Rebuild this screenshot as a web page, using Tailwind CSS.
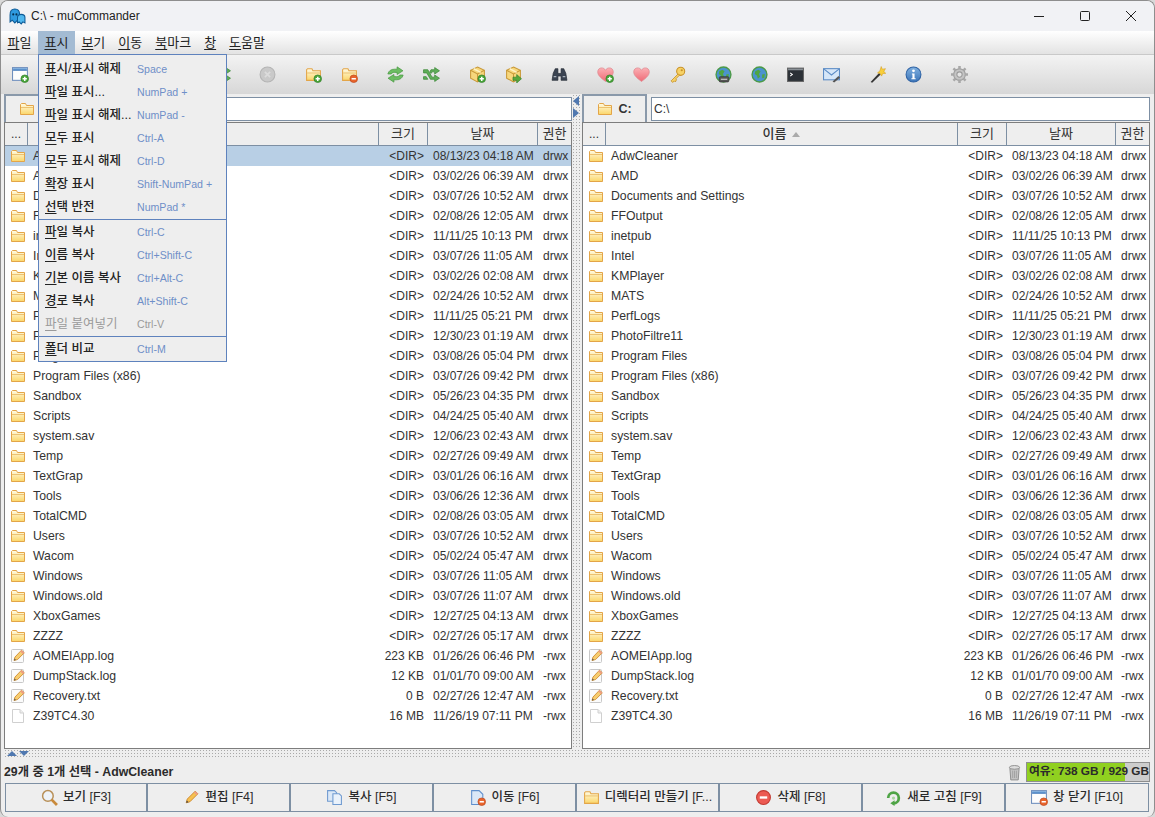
<!DOCTYPE html>
<html lang="ko">
<head>
    <meta charset="UTF-8">
    <title>C:\ - muCommander</title>
    <script src="https://cdn.jsdelivr.net/npm/@tailwindcss/browser@4"></script>
</head>
<body class="bg-[#d9d9d9] overflow-hidden font-['Liberation_Sans','Noto_Sans_CJK_KR',sans-serif] text-[12px] text-[#333]">
    <!-- icons -->
    <svg class="absolute w-0 h-0">
        <defs>
            <linearGradient id="fg" x1="0" y1="0" x2="0" y2="1"><stop offset="0" stop-color="#fffbe4"/><stop offset="1" stop-color="#fbd668"/></linearGradient>
            <linearGradient id="hg" x1="0" y1="0" x2="0" y2="1"><stop offset="0" stop-color="#fbb0b4"/><stop offset="1" stop-color="#ef6a76"/></linearGradient>
            <linearGradient id="bg" x1="0" y1="0" x2="0" y2="1"><stop offset="0" stop-color="#7fb0e0"/><stop offset="1" stop-color="#3b74b8"/></linearGradient>
            <symbol id="folder" viewBox="0 0 16 16"><path d="M1.500 3.500V13.500H14.500V4.500H7.500L6.500 2.500H2.500Z" fill="url(#fg)" stroke="#e3a548"/><path d="M2 6.500H14" stroke="#ecc272"/></symbol>
            <symbol id="plus" viewBox="0 0 16 16"><circle cx="12" cy="12" r="3.600" fill="#4aa53a" stroke="#2f7d28" stroke-width=".6"/><path d="M10 12H14M12 10V14" stroke="#fff" stroke-width="1.400"/></symbol>
            <symbol id="minus" viewBox="0 0 16 16"><circle cx="12" cy="12" r="3.600" fill="#e8642c" stroke="#b8431a" stroke-width=".6"/><path d="M10 12H14" stroke="#fff" stroke-width="1.500"/></symbol>
            <symbol id="window" viewBox="0 0 16 16"><rect x=".5" y="1.500" width="14" height="12" fill="#fdfdfd" stroke="#6f8fbd"/><rect x="1" y="2" width="13" height="2.500" fill="url(#bg)"/></symbol>
            <symbol id="file" viewBox="0 0 16 16"><path d="M2.500 1.500H10L13.500 5V14.500H2.500Z" fill="#fff" stroke="#d0d0d0"/><path d="M10 1.500V5H13.500" fill="#eee" stroke="#d0d0d0"/></symbol>
            <symbol id="pencil" viewBox="0 0 16 16"><path d="M3 13L4 9.500L11.500 2L14 4.500L6.500 12Z" fill="#f6c050" stroke="#c97f22" stroke-width=".8"/><path d="M11.500 2L14 4.500L12.800 5.700L10.300 3.200Z" fill="#ee9a86"/><path d="M3 13L3.600 10.800L5.200 12.400Z" fill="#444"/></symbol>
            <symbol id="textfile" viewBox="0 0 16 16"><rect x="1.500" y="1.500" width="12" height="13" rx="1" fill="#fbfbfb" stroke="#c8c8c8"/><path d="M4 12.500L5 9L11.500 2.200L14.300 4.800L7.600 11.500Z" fill="#f7cd70" stroke="#cf8d30" stroke-width=".9"/><path d="M11.500 2.200L14.300 4.800L13 6.100L10.200 3.500Z" fill="#ee9a86"/><path d="M4 12.500L4.500 10.500L6 12Z" fill="#555"/></symbol>
            <symbol id="box" viewBox="0 0 16 16"><path d="M8 1L14.500 4V11.500L8 15L1.500 11.500V4Z" fill="#f7d77c" stroke="#c99a3a"/><path d="M1.500 4L8 7.500L14.500 4M8 7.500V15" fill="none" stroke="#c99a3a"/><path d="M4.500 2.600L11 6" stroke="#fff3c4" stroke-width="1.400"/></symbol>
            <symbol id="heart" viewBox="0 0 16 16"><path d="M8 14.500C3 11 .7 8.500 .7 5.500C.7 3.200 2.400 1.800 4.300 1.800C5.900 1.800 7.200 2.600 8 4C8.800 2.600 10.100 1.800 11.700 1.800C13.600 1.800 15.300 3.200 15.300 5.500C15.300 8.500 13 11 8 14.500Z" fill="url(#hg)" stroke="#e08a90" stroke-width=".7"/></symbol>
            <symbol id="globe" viewBox="0 0 16 16"><circle cx="8" cy="8" r="7" fill="#4b93cf" stroke="#4c9a48" stroke-width="1.300"/><path d="M4 5L7 3.500L9 5L7.500 7.500L8.500 10L6.500 12L5.500 9L3.500 7.500ZM10.500 8L13 7.500L12.500 11L10.500 11.500Z" fill="#4fa544"/></symbol>
        </defs>
    </svg>

    <div class="relative flex flex-col w-[1155px] h-[817px] bg-[#eeeeee] rounded-lg border border-[#8e8e8e] border-b-0 overflow-hidden">
        <!-- title bar -->
        <div class="flex items-center h-[30px] bg-[#f1f2f5] shrink-0 text-[#222]">
            <svg viewBox="0 0 16 16" class="w-[17px] h-[17px] ml-[8px]">
                <path d="M1 13V6.500C1 3 3 1 5.500 1S10 3 10 6.500V13L8 11.500L5.500 14L3 11.500Z" fill="#2f9be0" stroke="#0d5a96"/>
                <path d="M8 14V9C8 7 9.500 6 11.500 6S15 7 15 9V14L13 13L11.500 15L9.500 13Z" fill="#4fb7ee" stroke="#0d5a96"/>
                <circle cx="4" cy="6" r="1" fill="#06304f"/><circle cx="7" cy="6" r="1" fill="#06304f"/>
            </svg>
            <span class="ml-[5px] text-[12px]">C:\ - muCommander</span>
            <div class="ml-auto flex h-full">
                <div class="w-[46px] flex items-center justify-center"><svg class="w-[12px] h-[12px]" viewBox="0 0 12 12"><path d="M1 6.500H11" stroke="#222"/></svg></div>
                <div class="w-[46px] flex items-center justify-center"><svg class="w-[12px] h-[12px]" viewBox="0 0 12 12"><rect x="1.500" y="1.500" width="9" height="9" rx="1" fill="none" stroke="#222"/></svg></div>
                <div class="w-[46px] flex items-center justify-center"><svg class="w-[12px] h-[12px]" viewBox="0 0 12 12"><path d="M1 1L11 11M11 1L1 11" stroke="#222"/></svg></div>
            </div>
        </div>

        <!-- menu bar -->
        <div class="flex items-stretch h-[24px] shrink-0 bg-linear-to-b from-white to-[#e3e3e3] border-b border-[#c9c9c9] text-[13px] text-[#222]">
            <span class="px-[6.500px] flex items-center"><u class="underline-offset-2">파</u>일</span>
            <span class="px-[6.500px] flex items-center bg-[#a3bbd3]"><u class="underline-offset-2">표</u>시</span>
            <span class="px-[6.500px] flex items-center"><u class="underline-offset-2">보</u>기</span>
            <span class="px-[6.500px] flex items-center"><u class="underline-offset-2">이</u>동</span>
            <span class="px-[6.500px] flex items-center"><u class="underline-offset-2">북</u>마크</span>
            <span class="px-[6.500px] flex items-center"><u class="underline-offset-2">창</u></span>
            <span class="px-[6.500px] flex items-center"><u class="underline-offset-2">도</u>움말</span>
        </div>

        <!-- toolbar -->
        <div id="toolbar" class="flex items-center h-[39px] shrink-0 pl-[1px] bg-linear-to-b from-[#f3f3f3] to-[#d7d7d7]"></div>

        <!-- panels -->
        <div class="flex flex-1 min-h-0 pl-[3px] pr-[4px]">
            <div id="leftPanel" class="w-[568px] flex flex-col"></div>
            <div class="w-[10px] relative bg-[radial-gradient(#a9a9a9_0.7px,transparent_0.8px)] bg-[length:3px_3px]">
                <div class="absolute left-[1px] top-[2px] w-0 h-0 border-y-[5px] border-y-transparent border-r-[6px] border-r-[#4f78b0]"></div>
                <div class="absolute left-[1px] top-[14px] w-0 h-0 border-y-[5px] border-y-transparent border-l-[6px] border-l-[#4f78b0]"></div>
            </div>
            <div id="rightPanel" class="w-[568px] flex flex-col"></div>
        </div>

        <!-- bottom splitter -->
        <div class="relative h-[10px] shrink-0 ml-[3px] mr-[4px] bg-[radial-gradient(#a9a9a9_0.7px,transparent_0.8px)] bg-[length:3px_3px]">
            <div class="absolute left-[3px] top-[2px] w-0 h-0 border-x-[5px] border-x-transparent border-b-[5px] border-b-[#4f78b0]"></div>
            <div class="absolute left-[15px] top-[2px] w-0 h-0 border-x-[5px] border-x-transparent border-t-[5px] border-t-[#4f78b0]"></div>
        </div>

        <!-- status bar -->
        <div class="flex items-center h-[24px] shrink-0 pt-[2px] pl-[3px] pr-[4px] font-semibold text-[#2b2b2b]">
            <span class="text-[12.300px]">29개 중 1개 선택 - AdwCleaner</span>
            <svg viewBox="0 0 14 18" class="ml-auto w-[13px] h-[17px]">
                <path d="M2 4H12L11 17H3Z" fill="#c4c4c4" stroke="#8a8a8a"/><ellipse cx="7" cy="3.500" rx="5.500" ry="2" fill="#dedede" stroke="#8a8a8a"/><path d="M5 7V15M7 7V15M9 7V15" stroke="#a0a0a0"/>
            </svg>
            <div class="relative ml-[5px] w-[124px] h-[20px] bg-[#cdcdcd] border border-[#8e8e8e] flex items-center">
                <div class="absolute left-0 top-0 h-full w-[98px] bg-[#90d020]"></div>
                <span class="relative ml-[2px] whitespace-nowrap font-semibold text-[11.800px]">여유: 738 GB / 929 GB</span>
            </div>
        </div>

        <!-- function keys -->
        <div id="buttons" class="flex h-[29px] shrink-0 ml-[4px] mr-[5px] border border-[#7d8fa3]"></div>
        <div class="h-[5px] shrink-0"></div>

        <!-- open menu -->
        <div id="menu" class="absolute left-[37px] top-[53px] w-[189px] h-[308px] pt-[3px] bg-[#eeeeee] border border-[#5e82bd]"></div>
    </div>

    <script>
        const rows = [
            ["f", "AdwCleaner", "<DIR>", "08/13/23 04:18 AM", "drwx"],
            ["f", "AMD", "<DIR>", "03/02/26 06:39 AM", "drwx"],
            ["f", "Documents and Settings", "<DIR>", "03/07/26 10:52 AM", "drwx"],
            ["f", "FFOutput", "<DIR>", "02/08/26 12:05 AM", "drwx"],
            ["f", "inetpub", "<DIR>", "11/11/25 10:13 PM", "drwx"],
            ["f", "Intel", "<DIR>", "03/07/26 11:05 AM", "drwx"],
            ["f", "KMPlayer", "<DIR>", "03/02/26 02:08 AM", "drwx"],
            ["f", "MATS", "<DIR>", "02/24/26 10:52 AM", "drwx"],
            ["f", "PerfLogs", "<DIR>", "11/11/25 05:21 PM", "drwx"],
            ["f", "PhotoFiltre11", "<DIR>", "12/30/23 01:19 AM", "drwx"],
            ["f", "Program Files", "<DIR>", "03/08/26 05:04 PM", "drwx"],
            ["f", "Program Files (x86)", "<DIR>", "03/07/26 09:42 PM", "drwx"],
            ["f", "Sandbox", "<DIR>", "05/26/23 04:35 PM", "drwx"],
            ["f", "Scripts", "<DIR>", "04/24/25 05:40 AM", "drwx"],
            ["f", "system.sav", "<DIR>", "12/06/23 02:43 AM", "drwx"],
            ["f", "Temp", "<DIR>", "02/27/26 09:49 AM", "drwx"],
            ["f", "TextGrap", "<DIR>", "03/01/26 06:16 AM", "drwx"],
            ["f", "Tools", "<DIR>", "03/06/26 12:36 AM", "drwx"],
            ["f", "TotalCMD", "<DIR>", "02/08/26 03:05 AM", "drwx"],
            ["f", "Users", "<DIR>", "03/07/26 10:52 AM", "drwx"],
            ["f", "Wacom", "<DIR>", "05/02/24 05:47 AM", "drwx"],
            ["f", "Windows", "<DIR>", "03/07/26 11:05 AM", "drwx"],
            ["f", "Windows.old", "<DIR>", "03/07/26 11:07 AM", "drwx"],
            ["f", "XboxGames", "<DIR>", "12/27/25 04:13 AM", "drwx"],
            ["f", "ZZZZ", "<DIR>", "02/27/26 05:17 AM", "drwx"],
            ["t", "AOMEIApp.log", "223 KB", "01/26/26 06:46 PM", "-rwx"],
            ["t", "DumpStack.log", "12 KB", "01/01/70 09:00 AM", "-rwx"],
            ["t", "Recovery.txt", "0 B", "02/27/26 12:47 AM", "-rwx"],
            ["b", "Z39TC4.30", "16 MB", "11/26/19 07:11 PM", "-rwx"]
        ];
        const rowIcons = { f: "folder", t: "textfile", b: "file" };
        const esc = s => s.replace(/</g, "&lt;").replace(/>/g, "&gt;");

        function panel(selected) {
            const rowCols = selected ? "grid-cols-[374px_49px_110px_33px]" : "grid-cols-[375px_49px_109px_33px]";
            const headCols = selected ? "grid-cols-[23px_351px_49px_110px_33px]" : "grid-cols-[23px_352px_49px_109px_33px]";
            const body = rows.map((r, i) => `
                <div class="grid ${rowCols} h-[20px] items-center whitespace-nowrap ${selected && i === 0 ? "bg-[#b8cfe5]" : ""}">
                    <div class="flex items-center pl-[5px]"><svg class="w-[16px] h-[16px]"><use href="#${rowIcons[r[0]]}"/></svg><span class="ml-[7px] text-[12.250px]">${r[1]}</span></div>
                    <div class="text-right pr-[4px]">${esc(r[2])}</div>
                    <div class="pl-[5px]">${r[3]}</div>
                    <div class="pl-[5px]">${r[4]}</div>
                </div>`).join("");
            return `
                <div class="flex h-[28px] shrink-0">
                    <div class="flex items-center justify-center gap-[5px] w-[65px] border-2 border-[#8a99aa] border-b-0 font-semibold">
                        <svg class="w-[16px] h-[16px]"><use href="#folder"/></svg><span class="text-[12.500px]">C:</span>
                    </div>
                    <div class="flex items-center flex-1 h-[24px] mt-[3px] ml-[4px] pl-[2px] bg-white border border-[#7d8fa3]">C:\\</div>
                </div>
                <div class="flex-1 min-h-0 bg-white border border-[#7d7d7d]">
                    <div class="grid ${headCols} h-[23px] bg-[#eeeeee] border-b border-[#7d8fa3] text-[13px]">
                        <div class="flex items-center justify-center border-r border-[#7d8fa3] text-[12px]">...</div>
                        <div class="flex items-center justify-center gap-[6px] border-r border-[#7d8fa3] font-medium">이름 <span class="w-0 h-0 border-x-[4px] border-x-transparent border-b-[5px] border-b-[#aaaaaa]"></span></div>
                        <div class="flex items-center justify-center border-r border-[#7d8fa3]">크기</div>
                        <div class="flex items-center justify-center border-r border-[#7d8fa3]">날짜</div>
                        <div class="flex items-center justify-center">권한</div>
                    </div>
                    ${body}
                </div>`;
        }
        document.getElementById("leftPanel").innerHTML = panel(true);
        document.getElementById("rightPanel").innerHTML = panel(false);

        // toolbar: 36px buttons, 10px separators
        const ic = (inner, vb) => `<svg viewBox="0 0 ${vb || 16} ${vb || 16}" class="w-[17px] h-[17px]">${inner}</svg>`;
        const swap = '<path d="M.5 3.500H4.500L8.500 10.500H11V8.500L15.500 11.500L11 14.500V12.500H7L3.500 6.500H.5Z" fill="#5fae58" stroke="#3d8a38" stroke-width=".7"/><path d="M.5 10H3L4.500 12.500H.5ZM6.500 5.500L7.500 3.500H11V1.500L15.500 4.500L11 7.500V5.500H8.500L7.500 7Z" fill="#5fae58" stroke="#3d8a38" stroke-width=".7"/>';
        const tool = [
            ic('<use href="#window" width="16" height="16"/><use href="#plus" width="16" height="16"/>'),
            "gapA",
            ic(swap),
            "gapB",
            ic('<circle cx="8" cy="8" r="7" fill="#c9c9c9" stroke="#b4b4b4"/><path d="M5.500 5.500L10.500 10.500M10.500 5.500L5.500 10.500" stroke="#dcdcdc" stroke-width="1.600"/>'),
            "sep",
            ic('<use href="#folder" width="16" height="16"/><use href="#plus" width="16" height="16"/>'),
            ic('<use href="#folder" width="16" height="16"/><use href="#minus" width="16" height="16"/>'),
            "sep",
            // flat loop of two chunky arrows
            ic('<path d="M.8 7.500C1.500 4.500 4 3 7 3H9.500V.8L15 4.500L9.500 8V6H7C5.500 6 4.500 6.500 4 7.500Z" fill="#6cbd62" stroke="#4a9a44" stroke-width=".7"/><path d="M15.200 8.500C14.500 11.500 12 13 9 13H6.500V15.200L1 11.500L6.500 8V10H9C10.500 10 11.500 9.500 12 8.500Z" fill="#6cbd62" stroke="#4a9a44" stroke-width=".7"/>'),
            ic(swap),
            "sep",
            ic('<use href="#box" width="16" height="16"/><use href="#plus" width="16" height="16"/>'),
            ic('<use href="#box" width="16" height="16"/><path d="M7.500 10.500H11V8L15.500 12L11 16V13.500H7.500Z" fill="#58a83c" stroke="#2f7d28" stroke-width=".6"/>'),
            "sep",
            ic('<path d="M2 7L4 2.500H6.500V7H9.500V2.500H12L14 7L15 13.500H9.500V9.500H6.500V13.500H1Z" fill="#3b4452" stroke="#20262f" stroke-width=".6"/><path d="M2.500 10H5M11 10H13.500" stroke="#aab2bd"/>'),
            "sep",
            ic('<use href="#heart" width="16" height="16"/><use href="#plus" width="16" height="16"/>'),
            ic('<use href="#heart" width="16" height="16"/>'),
            ic('<circle cx="11" cy="5" r="3.800" fill="#f7d266" stroke="#c8922a"/><path d="M8.500 7.500L2 14L3.500 15.500L5 14L6 15L7 13L6.500 12L10 8.500Z" fill="#f7d266" stroke="#c8922a" stroke-width=".8"/><circle cx="12" cy="4" r="1" fill="#c8922a"/>'),
            "sep",
            ic('<use href="#globe" width="16" height="16"/><rect x="4" y="10" width="9" height="5" rx="1" fill="#555" stroke="#333" stroke-width=".6"/><path d="M5.500 12.500H11.500" stroke="#ddd"/>'),
            ic('<use href="#globe" width="16" height="16"/>'),
            ic('<rect x=".5" y="2" width="15" height="12.500" fill="#2b3036" stroke="#666"/><rect x="1" y="2.500" width="14" height="1.500" fill="#8a9096"/><path d="M3 6.500L5 8L3 9.500" fill="none" stroke="#fff"/>'),
            ic('<rect x=".5" y="2.500" width="15" height="10.500" fill="#d5e6f8" stroke="#5b8bc5"/><path d="M1 3L8 8.500L15 3" fill="none" stroke="#5b8bc5"/><path d="M9 14.500L14.500 9.500L16 11L10.500 15.500Z" fill="#555"/>'),
            "sep",
            ic('<path d="M1.500 15L9.500 6.500L11 8L3 15.800Z" fill="#333"/><path d="M11.500 .5L12.500 3L15.500 2.500L14 5L15.800 7L13 7L11.800 9.500L10.500 7L8 6.500L10.300 4.500Z" fill="#f8cf3a" stroke="#d49a1c" stroke-width=".5"/>'),
            ic('<circle cx="8" cy="8" r="7" fill="url(#bg)" stroke="#2f63a5"/><circle cx="8" cy="4.500" r="1.300" fill="#fff"/><path d="M6.500 7H9V11.500H10V12.500H6V11.500H7V8H6.500Z" fill="#fff"/>'),
            "sep",
            ic('<path d="M8 2.500A5.500 5.500 0 1 0 8 13.500A5.500 5.500 0 1 0 8 2.500ZM8 5.500A2.500 2.500 0 1 1 8 10.500A2.500 2.500 0 1 1 8 5.500Z" fill="#c5c5c5" fill-rule="evenodd" stroke="#9a9a9a"/><path d="M8 0V3M8 13V16M0 8H3M13 8H16M2.300 2.300L4.400 4.400M11.600 11.600L13.700 13.700M13.700 2.300L11.600 4.400M4.400 11.600L2.300 13.700" stroke="#a8a8a8" stroke-width="2.400"/>')
        ];
        document.getElementById("toolbar").innerHTML = tool.map(t => {
            if (t === "sep") return '<div class="w-[10px] shrink-0"></div>';
            if (t === "gapA") return '<div class="w-[166px] shrink-0"></div>';
            if (t === "gapB") return '<div class="w-[9px] shrink-0"></div>';
            return `<div class="w-[36px] shrink-0 flex items-center justify-center">${t}</div>`;
        }).join("");

        // function key buttons
        const keys = [
            ['<circle cx="6.500" cy="6.500" r="5" fill="#eef3f8" stroke="#b89058" stroke-width="1.400"/><path d="M10 10L15 15" stroke="#c98a3c" stroke-width="2.600"/>', "보기 [F3]"],
            ['<use href="#pencil" width="16" height="16"/>', "편집 [F4]"],
            ['<path d="M1.500 1.500H8L10 3.500V11.500H1.500Z" fill="#dbe8f7" stroke="#6f9ad0"/><path d="M6.500 4.500H12.500L14.500 6.500V14.500H6.500Z" fill="#eaf2fb" stroke="#6f9ad0"/>', "복사 [F5]"],
            ['<path d="M2.500 1.500H9.500L13 5V14.500H2.500Z" fill="#dbe8f7" stroke="#5f8fcc"/><use href="#minus" width="16" height="16"/>', "이동 [F6]"],
            ['<use href="#folder" width="16" height="16"/>', "디렉터리 만들기 [F..."],
            ['<circle cx="8" cy="8" r="6.500" fill="#ec5a52" stroke="#c23a32"/><path d="M4.500 8H11.500" stroke="#fff" stroke-width="2.200"/>', "삭제 [F8]"],
            ['<path d="M3 8.500A5 5 0 1 1 8 13.500" fill="none" stroke="#4ea445" stroke-width="2.600"/><path d="M9 10.500L5 13.500L9 16Z" fill="#4ea445"/><circle cx="8" cy="8.500" r="1.500" fill="#a7d79f"/>', "새로 고침 [F9]"],
            ['<use href="#window" width="16" height="16"/><use href="#minus" width="16" height="16"/>', "창 닫기 [F10]"]
        ];
        document.getElementById("buttons").innerHTML = keys.map((k, i) => `
            <div class="flex items-center justify-center gap-[5px] ${i === 0 || i === 7 ? "w-[142px]" : "w-[143px]"} shrink-0 text-[12.500px] font-medium text-[#2b2b2b] whitespace-nowrap ${i < 7 ? "border-r-2 border-[#7d8fa3]" : ""}">
                <svg viewBox="0 0 16 16" class="w-[17px] h-[17px]">${k[0]}</svg><span>${k[1]}</span>
            </div>`).join("");

        // 표시 menu
        const items = [
            ["표", "시/표시 해제", "Space"],
            ["파", "일 표시...", "NumPad +"],
            ["파", "일 표시 해제...", "NumPad -"],
            ["모", "두 표시", "Ctrl-A"],
            ["모", "두 표시 해제", "Ctrl-D"],
            ["확", "장 표시", "Shift-NumPad +"],
            ["선", "택 반전", "NumPad *"],
            null,
            ["파", "일 복사", "Ctrl-C"],
            ["이", "름 복사", "Ctrl+Shift-C"],
            ["기", "본 이름 복사", "Ctrl+Alt-C"],
            ["경", "로 복사", "Alt+Shift-C"],
            ["파", "일 붙여넣기", "Ctrl-V", true],
            null,
            ["폴", "더 비교", "Ctrl-M"]
        ];
        document.getElementById("menu").innerHTML = items.map(it => {
            if (!it) return '<div class="h-[2px] border-t border-[#5e82bd]"></div>';
            return `<div class="flex items-center h-[23px] whitespace-nowrap">
                <span class="w-[98px] pl-[6px] shrink-0 text-[12.500px] ${it[3] ? "text-[#9a9a9a]" : "font-medium text-[#222]"}"><u class="underline-offset-2">${it[0]}</u>${it[1]}</span>
                <span class="text-[10.600px] ${it[3] ? "text-[#9a9a9a]" : "text-[#6f8fc8]"}">${it[2]}</span>
            </div>`;
        }).join("");
    </script>
</body>
</html>
